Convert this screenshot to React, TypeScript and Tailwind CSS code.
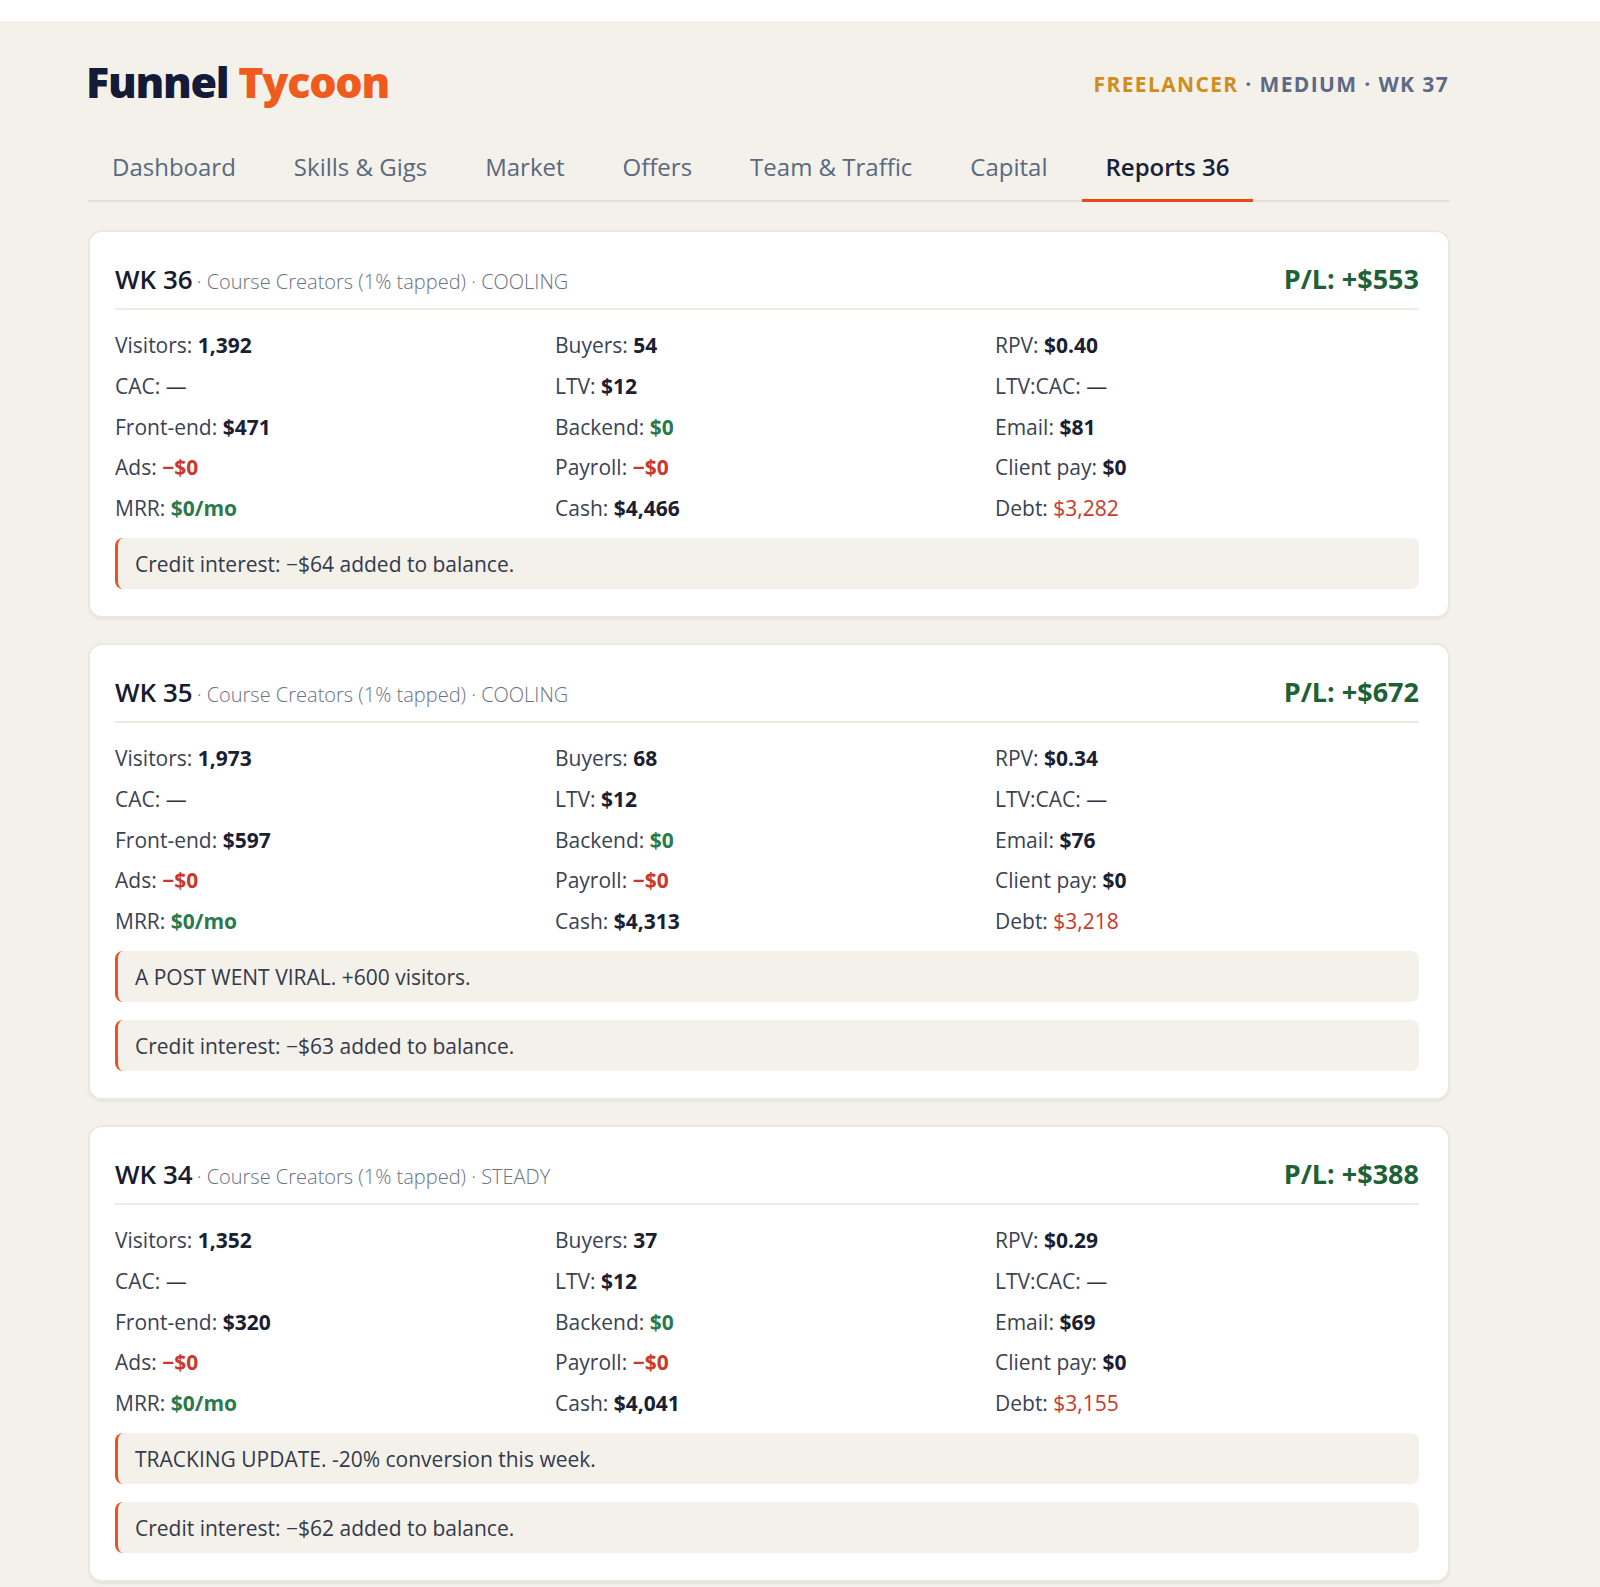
import React from "react";

type Tone = "dark" | "green" | "red" | "plain" | "redPlain";

type Stat = {
  label: string;
  value: string;
  tone: Tone;
};

type WeekReport = {
  week: number;
  segment: string;
  trend: string;
  profit: string;
  stats: Stat[];
  events: string[];
};

const tabs = [
  "Dashboard",
  "Skills & Gigs",
  "Market",
  "Offers",
  "Team & Traffic",
  "Capital",
  "Reports 36",
];

function buildStats(v: {
  visitors: string;
  buyers: string;
  rpv: string;
  frontEnd: string;
  email: string;
  cash: string;
  debt: string;
}): Stat[] {
  // same order as the grid reads: left to right, row by row
  return [
    { label: "Visitors:", value: v.visitors, tone: "dark" },
    { label: "Buyers:", value: v.buyers, tone: "dark" },
    { label: "RPV:", value: v.rpv, tone: "dark" },
    { label: "CAC:", value: "—", tone: "plain" },
    { label: "LTV:", value: "$12", tone: "dark" },
    { label: "LTV:CAC:", value: "—", tone: "plain" },
    { label: "Front-end:", value: v.frontEnd, tone: "dark" },
    { label: "Backend:", value: "$0", tone: "green" },
    { label: "Email:", value: v.email, tone: "dark" },
    { label: "Ads:", value: "−$0", tone: "red" },
    { label: "Payroll:", value: "−$0", tone: "red" },
    { label: "Client pay:", value: "$0", tone: "dark" },
    { label: "MRR:", value: "$0/mo", tone: "green" },
    { label: "Cash:", value: v.cash, tone: "dark" },
    { label: "Debt:", value: v.debt, tone: "redPlain" },
  ];
}

const reports: WeekReport[] = [
  {
    week: 36,
    segment: "Course Creators (1% tapped)",
    trend: "COOLING",
    profit: "+$553",
    stats: buildStats({
      visitors: "1,392",
      buyers: "54",
      rpv: "$0.40",
      frontEnd: "$471",
      email: "$81",
      cash: "$4,466",
      debt: "$3,282",
    }),
    events: ["Credit interest: −$64 added to balance."],
  },
  {
    week: 35,
    segment: "Course Creators (1% tapped)",
    trend: "COOLING",
    profit: "+$672",
    stats: buildStats({
      visitors: "1,973",
      buyers: "68",
      rpv: "$0.34",
      frontEnd: "$597",
      email: "$76",
      cash: "$4,313",
      debt: "$3,218",
    }),
    events: [
      "A POST WENT VIRAL. +600 visitors.",
      "Credit interest: −$63 added to balance.",
    ],
  },
  {
    week: 34,
    segment: "Course Creators (1% tapped)",
    trend: "STEADY",
    profit: "+$388",
    stats: buildStats({
      visitors: "1,352",
      buyers: "37",
      rpv: "$0.29",
      frontEnd: "$320",
      email: "$69",
      cash: "$4,041",
      debt: "$3,155",
    }),
    events: [
      "TRACKING UPDATE. -20% conversion this week.",
      "Credit interest: −$62 added to balance.",
    ],
  },
];

function StatValue({ value, tone }: { value: string; tone: Tone }) {
  if (tone === "green") {
    return <span className="font-bold text-[#2b7a4b]">{value}</span>;
  }
  if (tone === "red") {
    return <span className="font-bold text-[#c9392b]">{value}</span>;
  }
  if (tone === "redPlain") {
    return <span className="text-[#c9392b]">{value}</span>;
  }
  if (tone === "plain") {
    return <span className="text-[#2a3040]">{value}</span>;
  }
  return <span className="font-bold text-[#1a2030]">{value}</span>;
}

function ReportCard({ report }: { report: WeekReport }) {
  return (
    <section className="rounded-[14px] border-2 border-[#ebe8df] bg-white pt-[30px] pr-[29px] pb-[27px] pl-[25px] shadow-[0_2px_2px_rgba(60,50,30,0.06)]">
      <div className="flex items-baseline justify-between border-b-2 border-[#eeebe3] pb-[11px]">
        <div className="flex items-baseline">
          <h2 className="text-[26px] leading-[34px] font-semibold text-[#161c2e]">
            WK {report.week}
          </h2>
          <span className="ml-[4px] text-[20px] font-light text-[#6b7180]">
            · {report.segment} · {report.trend}
          </span>
        </div>
        <p className="text-[27px] leading-[34px] font-bold text-[#1d6237]">
          P/L: {report.profit}
        </p>
      </div>

      <div className="mt-[21px] grid grid-cols-3 gap-x-4 gap-y-[11.75px] text-[21px] leading-[29px]">
        {report.stats.map((stat) => (
          <p key={stat.label} className="whitespace-nowrap text-[#3b4252]">
            {stat.label} <StatValue value={stat.value} tone={stat.tone} />
          </p>
        ))}
      </div>

      <div className="mt-[15px] flex flex-col gap-[18px]">
        {report.events.map((event) => (
          <div
            key={event}
            className="rounded-lg border-l-[3px] border-[#e8531f] bg-[#f3f1ea] py-[11.5px] pl-[17px] text-[21px] leading-[28px] text-[#333a4a]"
          >
            {event}
          </div>
        ))}
      </div>
    </section>
  );
}

export default function App() {
  return (
    <div className="min-h-screen bg-white pt-[21px] font-['Open_Sans',sans-serif]">
      <div className="min-h-[1566px] bg-[#f3f1ea]">
        <div className="ml-[88px] w-[1362px]">
          <header className="flex items-center justify-between pt-[34px]">
            <h1 className="-ml-[2px] text-[43px] leading-[54px] font-extrabold tracking-[-0.03em]">
              <span className="text-[#141b38]">Funnel</span>{" "}
              <span className="text-[#ef5b1d]">Tycoon</span>
            </h1>
            <p className="mt-[6px] mr-[1px] text-[21px] font-bold tracking-[0.065em] text-[#5d6a84]">
              <span className="text-[#d08c1c]">FREELANCER</span> · MEDIUM · WK 37
            </p>
          </header>

          <nav className="mt-[42px] flex gap-[10px] border-b-2 border-[#e3e0d7]">
            {tabs.map((tab) => {
              const active = tab === "Reports 36";
              return (
                <button
                  key={tab}
                  className={
                    active
                      ? "-mb-[2px] border-b-[3px] border-[#e8481c] px-6 pb-[16px] text-[24px] leading-[32px] font-semibold text-[#18203a]"
                      : "-mb-[2px] border-b-[3px] border-transparent px-6 pb-[16px] text-[24px] leading-[32px] font-medium text-[#5a6880]"
                  }
                >
                  {tab}
                </button>
              );
            })}
          </nav>

          <div className="mt-[28px] flex flex-col gap-[25px] pb-1">
            {reports.map((report) => (
              <ReportCard key={report.week} report={report} />
            ))}
          </div>
        </div>
      </div>
    </div>
  );
}
